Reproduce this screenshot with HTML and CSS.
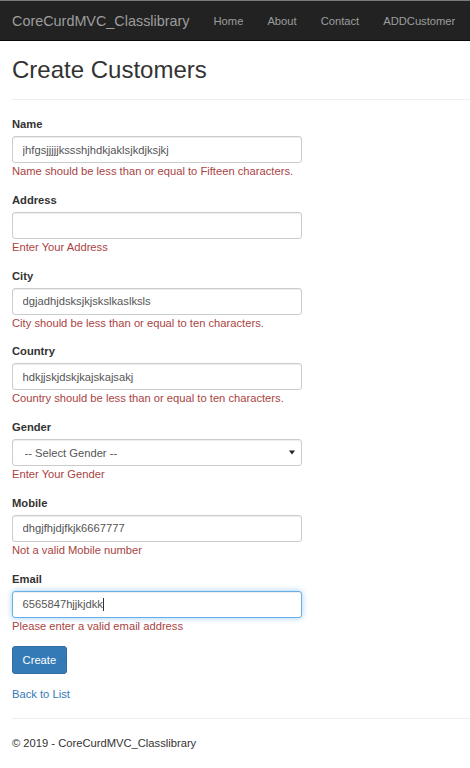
FILE: index.html
```html
<!DOCTYPE html>
<html lang="en">
<head>
<meta charset="utf-8">
<title>Create - CoreCurdMVC_Classlibrary</title>
<link rel="stylesheet" href="styles.css">
</head>
<body>
<nav class="navbar">
  <a class="brand" href="#">CoreCurdMVC_Classlibrary</a>
  <ul class="nav">
    <li><a href="#">Home</a></li>
    <li><a href="#">About</a></li>
    <li><a href="#">Contact</a></li>
    <li><a href="#">ADDCustomer</a></li>
  </ul>
</nav>
<div class="container">
  <h2 class="title">Create Customers</h2>
  <hr class="rule">
  <form class="form">
    <div class="form-group">
      <label class="label">Name</label>
      <input class="form-control" type="text" value="jhfgsjjjjjkssshjhdkjaklsjkdjksjkj">
      <span class="error">Name should be less than or equal to Fifteen characters.</span>
    </div>
    <div class="form-group">
      <label class="label">Address</label>
      <input class="form-control" type="text" value="">
      <span class="error">Enter Your Address</span>
    </div>
    <div class="form-group">
      <label class="label">City</label>
      <input class="form-control" type="text" value="dgjadhjdsksjkjskslkaslksls">
      <span class="error">City should be less than or equal to ten characters.</span>
    </div>
    <div class="form-group">
      <label class="label">Country</label>
      <input class="form-control" type="text" value="hdkjjskjdskjkajskajsakj">
      <span class="error">Country should be less than or equal to ten characters.</span>
    </div>
    <div class="form-group">
      <label class="label">Gender</label>
      <div class="select-wrap">
        <select class="form-control select">
          <option>-- Select Gender --</option>
          <option>Male</option>
          <option>Female</option>
        </select>
        <svg class="select-arrow" width="6" height="5" viewBox="0 0 6 5"><path d="M0 0.5 H6 L3 4.5 Z" fill="#222"/></svg>
      </div>
      <span class="error">Enter Your Gender</span>
    </div>
    <div class="form-group">
      <label class="label">Mobile</label>
      <input class="form-control" type="text" value="dhgjfhjdjfkjk6667777">
      <span class="error">Not a valid Mobile number</span>
    </div>
    <div class="form-group">
      <label class="label">Email</label>
      <div class="form-control focused"><span>6565847hjjkjdkk</span><span class="caret"></span></div>
      <span class="error">Please enter a valid email address</span>
    </div>
    <div class="form-group">
      <button class="btn" type="button">Create</button>
    </div>
  </form>
  <div class="back"><a href="#">Back to List</a></div>
  <hr class="rule">
  <footer class="footer">
    <p>&copy; 2019 - CoreCurdMVC_Classlibrary</p>
  </footer>
</div>
</body>
</html>
```
FILE: styles.css
```css
* { box-sizing: border-box; }
html, body { margin: 0; padding: 0; }
body {
  font-family: "Liberation Sans", Arial, Helvetica, sans-serif;
  font-size: 11.2px;
  line-height: 16px;
  color: #333;
  background: #fff;
}
a { color: #337ab7; text-decoration: none; }

.navbar {
  display: flex;
  align-items: center;
  height: 41px;
  background: #222;
  border-bottom: 1px solid #080808;
  border-top: 1px solid #7a7a7a;
  padding-left: 12px;
}
.brand {
  color: #9d9d9d;
  font-size: 14.4px;
  line-height: 20px;
  padding-right: 12px;
  padding-top: 1px;
}
.nav {
  display: flex;
  list-style: none;
  margin: 0;
  padding: 0;
}
.nav a {
  display: block;
  color: #9d9d9d;
  padding: 0 12px;
  font-size: 11.2px;
  line-height: 16px;
  padding-top: 1px;
}

.container {
  padding-left: 12px;
}
.title {
  font-size: 24px;
  font-weight: 500;
  line-height: 26.4px;
  margin: 16px 0 16px;
  color: #333;
}
.rule {
  margin: 0;
  border: 0;
  border-top: 1px solid #eee;
  height: 0;
}
.form { margin-top: 16px; }
.form-group {
  display: flex;
  flex-direction: column;
  align-items: flex-start;
  margin-bottom: 12.7px;
}
.label {
  font-weight: 700;
  line-height: 16px;
  margin-bottom: 4px;
}
.form-control {
  display: flex;
  align-items: center;
  width: 290px;
  height: 27px;
  padding: 0 9.6px;
  font-family: inherit;
  font-size: 11.2px;
  color: #555;
  background: #fff;
  border: 1px solid #ccc;
  border-radius: 3px;
  box-shadow: inset 0 1px 1px rgba(0,0,0,.075);
  outline: none;
  margin: 0;
}
.focused {
  border-color: #66afe9;
  box-shadow: inset 0 1px 1px rgba(0,0,0,.075), 0 0 6px rgba(102,175,233,.6);
}
.caret {
  display: inline-block;
  width: 1px;
  height: 13px;
  background: #333;
}
.select-wrap {
  position: relative;
  width: 290px;
}
.select {
  appearance: none;
  -webkit-appearance: none;
  padding-left: 11.5px;
  color: #555;
}
.select-arrow {
  position: absolute;
  right: 7px;
  top: 11px;
}
.error {
  color: #a94442;
  line-height: 16px;
}
.btn {
  font-family: inherit;
  font-size: 11.2px;
  line-height: 16px;
  color: #fff;
  background: #337ab7;
  border: 1px solid #2e6da4;
  border-radius: 3px;
  padding: 4.8px 9.6px;
  height: 27.5px;
  cursor: pointer;
}
.back {
  line-height: 16px;
  margin-bottom: 16px;
}
.footer p {
  margin: 16px 0 10px;
}
```
